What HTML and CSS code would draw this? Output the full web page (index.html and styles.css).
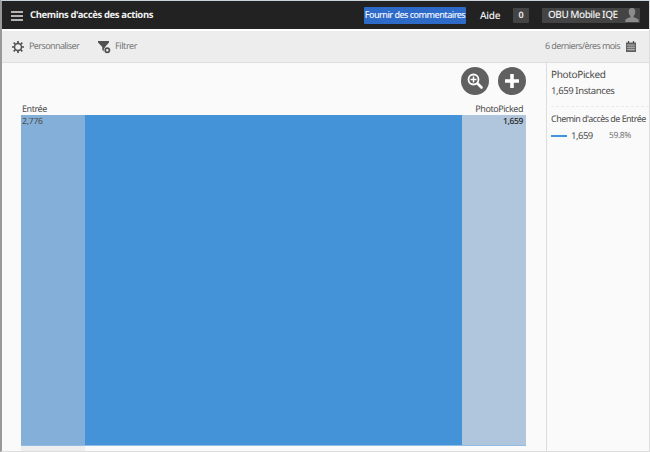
FILE: index.html
```html
<!DOCTYPE html>
<html lang="fr">
<head>
<meta charset="utf-8">
<title>Chemins d'accès des actions</title>
<link rel="stylesheet" href="styles.css">
</head>
<body>
<div class="app">
  <header class="topbar">
    <svg class="menu" width="12" height="10" viewBox="0 0 12 10"><path d="M0 1h12M0 5h12M0 9h12" stroke="#b4b4b4" stroke-width="1.8"/></svg>
    <h1 class="title">Chemins d'accès des actions</h1>
    <button class="feedback">Fournir des commentaires</button>
    <span class="help">Aide</span>
    <span class="count">0</span>
    <span class="account"><span class="account-name">OBU Mobile IQE</span>
      <svg width="14" height="14" viewBox="0 0 14 14"><path d="M7 0C4.500 0 3.500 1.700 3.700 4c.1 1.700.8 3.100 1.700 4v1.200C3.500 10 .5 10.500.3 12.200V14h13.400v-1.800C13.500 10.500 10.500 10 8.600 9.200V8c.9-.9 1.600-2.300 1.700-4C10.500 1.700 9.500 0 7 0z" fill="#8c8c8c"/></svg>
    </span>
  </header>
  <nav class="toolbar">
    <svg class="gear" width="12" height="12" viewBox="0 0 12 12"><circle cx="6" cy="6" r="3.500" fill="none" stroke="#505050" stroke-width="1.500"/><path d="M6 0v2M6 10v2M0 6h2M10 6h2M1.700 1.700l1.500 1.500M8.800 8.800l1.500 1.500M1.700 10.300l1.500-1.500M8.800 3.200l1.500-1.500" stroke="#505050" stroke-width="1.700"/></svg>
    <span class="tool customize">Personnaliser</span>
    <svg class="funnel" width="13" height="13" viewBox="0 0 13 13"><path d="M0 0h11v1.500L7 6v5.500L4.300 9V6L0 1.500z" fill="#505050"/><circle cx="9.300" cy="9.300" r="3.600" fill="#ededed"/><circle cx="9.300" cy="9.300" r="2.100" fill="none" stroke="#505050" stroke-width="1.700"/></svg>
    <span class="tool filter">Filtrer</span>
    <span class="tool period">6 derniers/ères mois</span>
    <svg class="calendar" width="10" height="11" viewBox="0 0 10 11"><path d="M0 1.500h10V11H0z" fill="#606060"/><path d="M2.500 0v2.500M7.500 0v2.500" stroke="#505050" stroke-width="1.300"/><path d="M1 4h8M1 6.300h8M1 8.600h8" stroke="#c8c8c8" stroke-width=".8"/><path d="M3.200 4v6M5.200 4v6M7.200 4v6" stroke="#aaa" stroke-width=".5"/></svg>
  </nav>
  <div class="content">
    <main class="chart">
      <div class="actions">
        <span class="round"><svg width="28" height="28" viewBox="0 0 28 28"><circle cx="12.500" cy="12.500" r="5" fill="none" stroke="#fff" stroke-width="1.800"/><path d="M9.500 12.500h6M12.500 9.500v6" stroke="#fff" stroke-width="1.500"/><path d="M16.500 16.500l4 4" stroke="#fff" stroke-width="2.600" stroke-linecap="round"/></svg></span>
        <span class="round"><svg width="28" height="28" viewBox="0 0 28 28"><path d="M14 7v14M7 14h14" stroke="#fff" stroke-width="3.600"/></svg></span>
      </div>
      <div class="labels"><span class="label-start">Entrée</span><span class="label-end">PhotoPicked</span></div>
      <div class="flow">
        <div class="node start"><span>2,776</span></div>
        <div class="path"></div>
        <div class="node end"><span>1,659</span></div>
      </div>
      <div class="exit"></div>
    </main>
    <aside class="details">
      <h2 class="name">PhotoPicked</h2>
      <p class="instances">1,659 Instances</p>
      <h3 class="origin">Chemin d'accès de Entrée</h3>
      <p class="legend"><i class="swatch"></i><span class="value">1,659</span><span class="share">59.8%</span></p>
    </aside>
  </div>
</div>
</body>
</html>
```
FILE: styles.css
```css
* { box-sizing: border-box; }
body { margin: 0; font-family: "Noto Sans", "Liberation Sans", sans-serif; font-size: 9px; color: #4b4b4b; text-rendering: geometricPrecision; }
h1, h2, h3, p { margin: 0; font-weight: 400; }
svg { display: block; flex: none; }
span { white-space: nowrap; }
.app { width: 650px; height: 452px; display: flex; flex-direction: column; background: #fafafa; border: solid #ddd; border-width: 1px 1px 1px 2px; border-top-color: #c8d4da; border-left-color: #999; overflow: hidden; }
.topbar { height: 28px; flex: none; display: flex; align-items: center; background: #222; color: #f0f0f0; padding: 0 9px; }
.menu { margin: 2px 7px 0 0; }
.title { font-size: 9.5px; font-weight: 700; line-height: 14px; width: 334px; padding-bottom: 1px; white-space: nowrap; letter-spacing: -.38px; }
.feedback { width: 102px; height: 17px; border: 0; border-radius: 1px; padding: 0 0 1px; background: #2e6bc9; color: #f4f7ff; font: 500 9px/16px "Noto Sans", sans-serif; letter-spacing: -.54px; white-space: nowrap; }
.help { font-size: 10px; margin-left: 14px; width: 33px; letter-spacing: -.25px; padding-bottom: 1px; font-weight: 500; }
.count { width: 16px; height: 15px; line-height: 14px; text-align: center; font-weight: 600; background: #444; border-radius: 1px; }
.account { width: 98px; height: 15px; margin-left: 13px; padding: 0 1px 0 6px; display: flex; align-items: center; justify-content: space-between; background: #444; border-radius: 1px; font-size: 10px; line-height: 14px; letter-spacing: -.5px; font-weight: 500; }
.account-name { padding-bottom: 2px; }
.toolbar { height: 34px; flex: none; display: flex; align-items: center; background: #ededed; border-top: 2px solid #fff; border-bottom: 1px solid #dedede; padding: 0 13px 0 10px; color: #777; }
.gear { margin: 0 5px 0 0; }
.tool { line-height: 14px; padding-bottom: 2px; letter-spacing: -.6px; }
.customize { width: 69px; }
.funnel { margin: 1px 4px 0 0; }
.filter { flex: 1; letter-spacing: -.4px; }
.calendar { margin: 0 0 0 6px; }
.content { flex: 1; display: flex; min-height: 0; }
.chart { width: 545px; flex: none; padding: 4px 20px 0 19px; border-right: 1px solid #ddd; }
.actions { display: flex; justify-content: flex-end; gap: 9px; height: 28px; }
.round { width: 28px; height: 28px; border-radius: 50%; background: #606060; }
.labels { display: flex; justify-content: space-between; height: 20px; padding: 8px 3px 0 1px; line-height: 12px; letter-spacing: -.45px; }
.flow { display: flex; height: 331px; border-bottom: 1px solid #91bce3; }
.node { width: 64px; padding: 0 3px 0 1px; line-height: 13px; }
.start { background: #84afd8; font-size: 8.5px; letter-spacing: -.2px; }
.end { background: #b0c6dc; color: #222; text-align: right; font-weight: 500; font-size: 8.5px; letter-spacing: -.35px; }
.path { flex: 1; background: #4492d7; }
.exit { width: 64px; height: 6px; background: #eee; }
.details { flex: 1; padding: 4px 0 0 4px; white-space: nowrap; }
.name { font-size: 10px; line-height: 14px; letter-spacing: -.35px; }
.instances { font-size: 9.5px; line-height: 14px; height: 26px; padding-top: 3px; border-bottom: 1px dashed #eaeaea; margin-bottom: 5px; letter-spacing: -.4px; }
.origin { font-size: 9px; line-height: 14px; letter-spacing: -.55px; }
.legend { display: flex; align-items: center; line-height: 14px; margin-top: 3px; }
.swatch { width: 16px; height: 2px; background: #4492d7; }
.value { font-size: 9.5px; margin-left: 4px; width: 38px; letter-spacing: -.5px; }
.share { font-size: 8.5px; color: #777; letter-spacing: -.4px; }
```
